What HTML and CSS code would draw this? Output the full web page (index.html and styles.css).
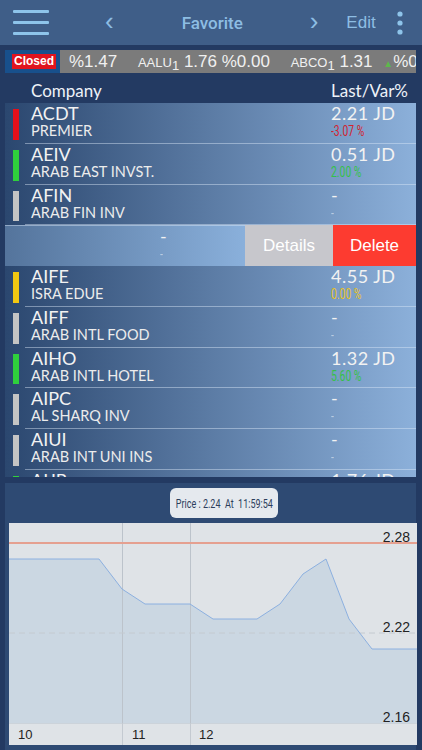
FILE: index.html
```html
<!DOCTYPE html>
<html lang="en">
<head>
    <meta charset="UTF-8">
    <meta name="viewport" content="width=device-width, initial-scale=1.0">
    <title>Favorite</title>
    <link rel="stylesheet" href="styles.css">
</head>
<body>

<header class="topbar">
    <svg class="menu" width="36" height="26" viewBox="0 0 36 26">
        <rect x="0" y="0" width="36" height="3" rx="1"/>
        <rect x="0" y="11" width="36" height="3" rx="1"/>
        <rect x="0" y="22" width="36" height="3" rx="1"/>
    </svg>
    <span class="nav prev">&lsaquo;</span>
    <span class="title">Favorite</span>
    <span class="nav next">&rsaquo;</span>
    <span class="edit">Edit</span>
    <svg class="more" width="6" height="24" viewBox="0 0 6 24">
        <circle cx="3" cy="3" r="2.6"/>
        <circle cx="3" cy="12" r="2.6"/>
        <circle cx="3" cy="21" r="2.6"/>
    </svg>
</header>

<div class="ticker">
    <div class="strip">
        <div class="status"><span class="closed">Closed</span></div>
        <div class="tape">
            <span class="num">%1.47</span>
            <span class="sym">AALU<sub>1</sub></span>
            <span class="num">1.76 %0.00</span>
            <span class="sym">ABCO<sub>1</sub></span>
            <span class="num">1.31</span>
            <span class="up">&#9650;</span><span class="num">%0.78</span>
        </div>
    </div>
</div>

<div class="list-head">
    <span>Company</span>
    <span class="lv">Last/Var%</span>
</div>

<div class="list">
    <div class="row">
        <span class="bar red"></span>
        <div class="cell">
            <div class="co"><div class="code">ACDT</div><div class="name">PREMIER</div></div>
            <div class="px"><div class="last">2.21 JD</div><div class="chg down">-3.07 %</div></div>
        </div>
    </div>
    <div class="row">
        <span class="bar green"></span>
        <div class="cell">
            <div class="co"><div class="code">AEIV</div><div class="name">ARAB EAST INVST.</div></div>
            <div class="px"><div class="last">0.51 JD</div><div class="chg up">2.00 %</div></div>
        </div>
    </div>
    <div class="row">
        <span class="bar grey"></span>
        <div class="cell">
            <div class="co"><div class="code">AFIN</div><div class="name">ARAB FIN INV</div></div>
            <div class="px"><div class="last">-</div><div class="chg none">-</div></div>
        </div>
    </div>
    <div class="row swiped">
        <div class="slide">
            <div class="px"><div class="last">-</div><div class="chg none">-</div></div>
        </div>
        <div class="action details">Details</div>
        <div class="action delete">Delete</div>
    </div>
    <div class="row">
        <span class="bar yellow"></span>
        <div class="cell">
            <div class="co"><div class="code">AIFE</div><div class="name">ISRA EDUE</div></div>
            <div class="px"><div class="last">4.55 JD</div><div class="chg flat">0.00 %</div></div>
        </div>
    </div>
    <div class="row">
        <span class="bar grey"></span>
        <div class="cell">
            <div class="co"><div class="code">AIFF</div><div class="name">ARAB INTL FOOD</div></div>
            <div class="px"><div class="last">-</div><div class="chg none">-</div></div>
        </div>
    </div>
    <div class="row">
        <span class="bar green"></span>
        <div class="cell">
            <div class="co"><div class="code">AIHO</div><div class="name">ARAB INTL HOTEL</div></div>
            <div class="px"><div class="last">1.32 JD</div><div class="chg up">5.60 %</div></div>
        </div>
    </div>
    <div class="row">
        <span class="bar grey"></span>
        <div class="cell">
            <div class="co"><div class="code">AIPC</div><div class="name">AL SHARQ INV</div></div>
            <div class="px"><div class="last">-</div><div class="chg none">-</div></div>
        </div>
    </div>
    <div class="row">
        <span class="bar grey"></span>
        <div class="cell">
            <div class="co"><div class="code">AIUI</div><div class="name">ARAB INT UNI INS</div></div>
            <div class="px"><div class="last">-</div><div class="chg none">-</div></div>
        </div>
    </div>
    <div class="row">
        <span class="bar green"></span>
        <div class="cell">
            <div class="co"><div class="code">AIJP</div><div class="name">ARAB INV PROJ</div></div>
            <div class="px"><div class="last">1.76 JD</div><div class="chg up">0.00 %</div></div>
        </div>
    </div>
</div>

<section class="chart-box">
    <div class="tip"><span>Price : 2.24&nbsp; At &nbsp;11:59:54</span></div>
    <svg class="chart" width="408" height="222" viewBox="0 0 408 222">
        <rect x="0" y="0" width="408" height="222" fill="#dfe3e7"/>
        <polygon fill="#cbd7e2" points="0,36 90,36 113,66 136,81 181,81 204,96 248,96 271,81 294,51 317,36 340,96 363,126 408,126 408,200 0,200"/>
        <line x1="113.5" y1="0" x2="113.5" y2="222" stroke="#bcc3cb" stroke-width="1"/>
        <line x1="181.5" y1="0" x2="181.5" y2="222" stroke="#bcc3cb" stroke-width="1"/>
        <line x1="0" y1="110" x2="408" y2="110" stroke="#c4cad0" stroke-width="1" stroke-dasharray="6 4"/>
        <polyline fill="none" stroke="#8cb0e0" stroke-width="1" points="0,36 90,36 113,66 136,81 181,81 204,96 248,96 271,81 294,51 317,36 340,96 363,126 408,126"/>
        <line x1="0" y1="20" x2="408" y2="20" stroke="#e5a090" stroke-width="2"/>
        <rect x="0" y="200" width="408" height="22" fill="#dfe3e7"/>
        <line x1="0" y1="200.5" x2="408" y2="200.5" stroke="#ccd3da" stroke-width="1"/>
        <line x1="113.5" y1="200" x2="113.5" y2="222" stroke="#c4cad1" stroke-width="1"/>
        <line x1="181.5" y1="200" x2="181.5" y2="222" stroke="#c4cad1" stroke-width="1"/>
        <text class="ylab" x="401" y="19" text-anchor="end">2.28</text>
        <text class="ylab" x="401" y="109" text-anchor="end">2.22</text>
        <text class="ylab" x="401" y="199" text-anchor="end">2.16</text>
        <text class="xlab" x="9" y="216">10</text>
        <text class="xlab" x="123" y="216">11</text>
        <text class="xlab" x="190" y="216">12</text>
    </svg>
</section>

</body>
</html>
```

FILE: styles.css
```css
body {
    margin: 0;
    width: 422px;
    height: 750px;
    overflow: hidden;
    background-color: #233a62;
    font-family: 'Liberation Sans', Arial, sans-serif;
    color: #f2f2f2;
}

/* top navigation bar */
.topbar {
    height: 45px;
    background-color: #3f5e88;
    display: flex;
    align-items: center;
    color: #8dbde3;
    font-size: 17px;
}

.menu {
    fill: #8ec4ea;
    margin-left: 13px;
}

.nav {
    font-size: 26px;
    line-height: 1;
    margin-top: -3px;
}

.prev {
    margin-left: 56px;
}

.title {
    margin-left: 68px;
    width: 128px;
    font-weight: 500;
    font-family: 'Roboto', sans-serif;
}

.edit {
    margin-left: 28px;
}

.more {
    fill: #8ec4ea;
    margin-left: 21px;
}

/* market ticker */
.ticker {
    height: 32px;
    padding: 5px 6px 0 5px;
    box-sizing: border-box;
}

.strip {
    height: 23px;
    display: flex;
}

.status {
    width: 55px;
    background-color: #18508c;
    display: flex;
    align-items: center;
}

.closed {
    margin-left: 7px;
    background-color: #e0141e;
    color: #fff;
    font-weight: bold;
    font-size: 12px;
    line-height: 15px;
    padding: 0 2px;
}

.tape {
    flex: 1;
    background-color: #7b7b7b;
    white-space: nowrap;
    overflow: hidden;
    padding-left: 9px;
    line-height: 23px;
    font-size: 17px;
    color: #f0f0f0;
}

.tape .sym {
    font-size: 13px;
    margin-left: 16px;
}

.tape sub {
    font-size: 13px;
    vertical-align: -3px;
    line-height: 0;
}

.tape .up {
    color: #5cb84c;
    font-size: 10px;
    margin-left: 6px;
}

/* favourite list */
.list-head {
    height: 26px;
    display: flex;
    align-items: center;
    padding-left: 31px;
    font-family: 'Lato', sans-serif;
    font-size: 17px;
    color: #eef2f8;
}

.list-head .lv {
    margin-left: auto;
    margin-right: 14px;
}

.list {
    margin: 0 6px 0 5px;
    height: 374px;
    overflow: hidden;
    font-family: 'Lato', sans-serif;
}

.row {
    height: 40.75px;
    display: flex;
    background: linear-gradient(90deg, #2b476f, #8cb0da);
}

.bar {
    width: 6px;
    margin: 6px 6px 4px 8px;
}

.bar.red { background-color: #e5101a; }
.bar.green { background-color: #2fd03c; }
.bar.grey { background-color: #c4c4c4; }
.bar.yellow { background-color: #f2c811; }

.cell {
    flex: 1;
    display: flex;
    padding-left: 6px;
    border-bottom: 1px solid rgba(220, 232, 248, 0.45);
}

.co {
    flex: 1;
}

.code,
.last {
    font-size: 18px;
    line-height: 20px;
}

.name {
    font-size: 14.5px;
    line-height: 16px;
    color: #ececec;
}

.px {
    width: 85px;
}

.last {
    letter-spacing: 0.5px;
}

.chg {
    font-family: 'Roboto', sans-serif;
    font-size: 14px;
    line-height: 16px;
    transform: scaleX(0.74);
    transform-origin: left center;
    white-space: nowrap;
}

.chg.down { color: #d3232e; }
.chg.up { color: #35c04a; }
.chg.flat { color: #e9c21d; }
.chg.none { color: #b8cbe2; }

/* row swiped open */
.row.swiped {
    background: none;
}

.slide {
    width: 240px;
    padding-left: 155px;
    box-sizing: border-box;
    background: linear-gradient(90deg, #54749c, #8ab0db);
    border-top: 1px solid rgba(220, 232, 248, 0.45);
}

.action {
    display: flex;
    align-items: center;
    justify-content: center;
    font-family: 'Liberation Sans', Arial, sans-serif;
    font-size: 17px;
    color: #fff;
}

.details {
    width: 88px;
    background-color: #c7c7cc;
}

.delete {
    flex: 1;
    background-color: #fd3b30;
}

/* price chart */
.chart-box {
    margin: 6px 6px 0 5px;
    height: 267px;
    background-color: #2e4a73;
    padding-top: 5px;
    box-sizing: border-box;
}

.tip {
    width: 108px;
    height: 30px;
    margin: 0 0 5px 165px;
    box-sizing: border-box;
    background-color: #e5e9ee;
    border-radius: 6px;
    display: flex;
    align-items: center;
    justify-content: center;
    white-space: nowrap;
}

.tip span {
    flex: none;
    font-family: 'Roboto', sans-serif;
    font-size: 12.5px;
    color: #2c3e5c;
    transform: scaleX(0.72);
}

.chart {
    display: block;
    margin-left: 4px;
}

.ylab {
    font-family: 'Liberation Sans', Arial, sans-serif;
    font-size: 14px;
    fill: #222;
}

.xlab {
    font-family: 'Liberation Sans', Arial, sans-serif;
    font-size: 13px;
    fill: #222;
}
```
